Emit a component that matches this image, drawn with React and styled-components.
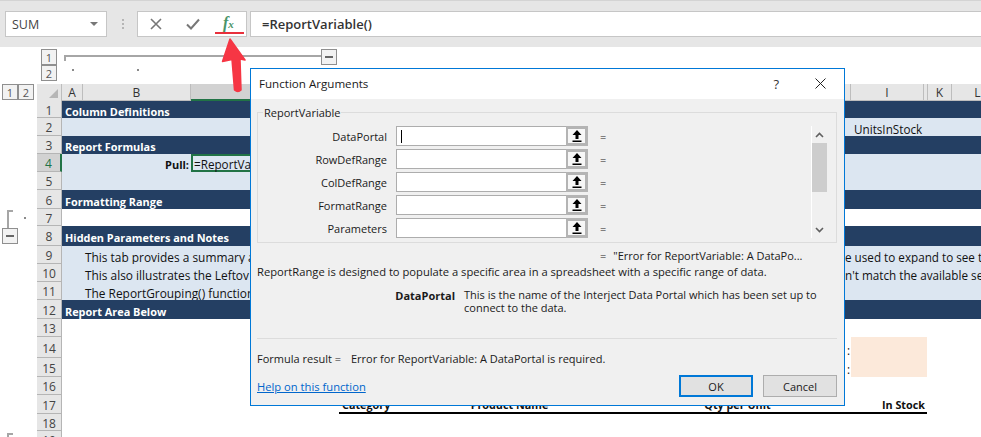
import React from 'react';
import styled, { createGlobalStyle } from 'styled-components';

const GlobalStyle = createGlobalStyle`
  html, body {
    margin: 0;
    padding: 0;
    background: #fff;
  }
  * {
    box-sizing: border-box;
  }
`;

const Page = styled.div`
  position: relative;
  width: 981px;
  height: 437px;
  overflow: hidden;
  background: #fff;
  color: #111;
  font-family: 'Open Sans', 'Liberation Sans', sans-serif;
  font-size: 11px;
`;

const FormulaBar = styled.div`
  display: flex;
  align-items: center;
  height: 47px;
  padding-left: 5px;
  background: #e6e6e6;
  border-top: 1px solid #d4d4d4;
`;

const NameBox = styled.div`
  display: flex;
  align-items: center;
  justify-content: space-between;
  width: 102px;
  height: 26px;
  padding: 0 8px 0 6px;
  background: #fff;
  border: 1px solid #c6c6c6;
  font-size: 12.5px;
  color: #444;
`;

const Caret = styled.span`
  width: 0;
  height: 0;
  border-left: 4px solid transparent;
  border-right: 4px solid transparent;
  border-top: 4px solid #777;
`;

const Grip = styled.div`
  display: flex;
  flex-direction: column;
  gap: 2px;
  margin: 0 13px 0 15px;
`;

const GripDot = styled.span`
  width: 2px;
  height: 2px;
  background: #b5b5b5;
`;

const FxBox = styled.div`
  position: relative;
  display: flex;
  align-items: center;
  width: 110px;
  height: 26px;
  padding-left: 12px;
  background: #fff;
  border: 1px solid #c6c6c6;
`;

const FxIcon = styled.span`
  margin: -3px 0 0 23px;
  font-family: 'Liberation Serif', serif;
  font-style: italic;
  font-weight: 700;
  font-size: 16px;
  color: #4a9468;

  small {
    font-size: 11px;
  }
`;

const FxUnderline = styled.span`
  position: absolute;
  left: 77px;
  bottom: 2px;
  width: 29px;
  height: 2px;
  background: #e8303c;
`;

const FormulaInput = styled.div`
  display: flex;
  align-items: center;
  flex: 1;
  height: 26px;
  margin-left: 3px;
  padding-left: 11px;
  background: #fff;
  border: 1px solid #c6c6c6;
  border-right: none;
  font-size: 13px;
  font-weight: 600;
  color: #333;
`;

const OutlineBar = styled.div`
  display: flex;
  height: 37px;
  padding: 2px 0 0 41px;
`;

const LevelStack = styled.div`
  display: flex;
  flex-direction: column;
`;

const LevelButton = styled.div`
  display: flex;
  align-items: center;
  justify-content: center;
  width: 16px;
  height: 16px;
  border: 1px solid #8f8f8f;
  background: #f2f2f2;
  color: #555;
  font-size: 11px;
`;

const OutlineTrack = styled.div`
  position: relative;
  width: 258px;
  height: 22px;
  margin-left: 7px;
`;

const OutlineLine = styled.div`
  width: 100%;
  height: 6px;
  margin-top: 6px;
  border-top: 2px solid #a6a6a6;
  border-left: 2px solid #a6a6a6;
`;

const OutlineDots = styled.div`
  display: flex;
  gap: 63px;
  padding-left: 8px;
  margin-top: 8px;
`;

const TinyDot = styled.span`
  width: 2px;
  height: 2px;
  background: #8a8a8a;
`;

const MinusButton = styled(LevelButton)`
  position: ${({ $floating }) => ($floating ? 'absolute' : 'static')};
  top: 0;
  right: -15px;
  &::before {
    content: '';
    width: 8px;
    height: 2px;
    background: #666;
  }
`;

const SheetArea = styled.div`
  display: flex;
`;

const Gutter = styled.div`
  display: flex;
  flex-direction: column;
  flex: none;
  width: 37px;
  padding-left: 2px;
`;

const LevelRow = styled.div`
  display: flex;
  margin-bottom: 110px;
`;

const BracketRow = styled.div`
  display: flex;
  height: 18px;
  padding-left: 5px;
`;

const Bracket = styled.div`
  width: 6px;
  height: 18px;
  border-left: 2px solid #a6a6a6;
  border-top: 2px solid #a6a6a6;
`;

const BracketDot = styled(TinyDot)`
  margin: 7px 0 0 11px;
`;

const BracketStub = styled.div`
  width: 6px;
  height: 4px;
  margin: 189px 0 0 5px;
  border-left: 2px solid #a6a6a6;
  border-top: 2px solid #a6a6a6;
`;

const Sheet = styled.div`
  flex: 1;
  min-width: 0;
  display: flex;
  flex-direction: column;
`;

const ColumnHeader = styled.div`
  display: flex;
  height: 17px;
`;

const Corner = styled.div`
  display: flex;
  align-items: flex-end;
  justify-content: flex-end;
  flex: none;
  width: 25px;
  padding: 0 3px 3px 0;
  background: #e6e6e6;
  border-right: 1px solid #bdbdbd;
  &::after {
    content: '';
    border-left: 9px solid transparent;
    border-bottom: 9px solid #b6b6b6;
  }
`;

const ColumnCell = styled.div`
  display: flex;
  align-items: center;
  justify-content: center;
  flex: none;
  width: ${({ $w }) => $w}px;
  background: ${({ $active }) => ($active ? '#d2d2d2' : '#e6e6e6')};
  border-right: 1px solid #bdbdbd;
  border-bottom: ${({ $active }) => ($active ? '2px solid #217346' : '1px solid #bdbdbd')};
  font-size: 12px;
  color: #333;
`;

const Row = styled.div`
  display: flex;
  height: ${({ $h }) => $h}px;
`;

const RowHead = styled.div`
  display: flex;
  align-items: center;
  justify-content: center;
  width: 25px;
  flex: none;
  padding-top: 2px;
  background: ${({ $active }) => ($active ? '#d2d2d2' : '#e6e6e6')};
  border-bottom: 1px solid #b5b5b5;
  border-right: ${({ $active }) => ($active ? '2px solid #217346' : '1px solid #b5b5b5')};
  color: ${({ $active }) => ($active ? '#217346' : '#444')};
  font-size: 12px;
`;

const tones = { dark: '#243f63', light: '#dce6f1', none: '#fff' };

const RowBody = styled.div`
  flex: 1;
  min-width: 0;
  display: flex;
  align-items: center;
  overflow: hidden;
  white-space: nowrap;
  background: ${({ $tone }) => tones[$tone]};
  color: ${({ $tone }) => ($tone === 'dark' ? '#fff' : '#111')};
  font-size: ${({ $tone }) => ($tone === 'dark' ? 10.9 : 11.7)}px;
  font-weight: ${({ $tone }) => ($tone === 'dark' ? 700 : 400)};
  padding-left: ${({ $tone }) => ($tone === 'dark' ? 3 : 0)}px;
  padding-top: ${({ $flush }) => ($flush ? 0 : 3)}px;
`;

const NoteLeft = styled.span`
  width: 188px;
  flex: none;
  padding-left: 23px;
  overflow: hidden;
  font-size: 11.9px;
`;

const NoteRight = styled.span`
  flex: none;
  margin-left: ${({ $offset }) => $offset}px;
`;

const PullLabel = styled.span`
  flex: none;
  width: 129px;
  padding: 2px 2px 0 0;
  text-align: right;
  font-size: 11px;
  font-weight: 700;
`;

const ActiveCell = styled.div`
  display: flex;
  align-items: center;
  flex: none;
  height: 100%;
  width: 200px;
  padding: 1px 0 0 1px;
  border: 2px solid #217346;
`;

const PeachBlock = styled.div`
  display: flex;
  align-items: flex-end;
  height: 100%;
  margin-left: 785px;
  line-height: 15px;
  &::after {
    content: '';
    align-self: stretch;
    width: 76px;
    margin-left: 1px;
    background: #fce9da;
  }
`;

const ReportHead = styled.div`
  display: flex;
  align-items: flex-end;
  justify-content: space-between;
  flex: none;
  width: 588px;
  height: 19px;
  margin-left: 277px;
  padding: 0 2px 0 3px;
  border-bottom: 2px solid #000;
  font-size: 10.8px;
  font-weight: 700;
`;

const HeadLabel = styled.span`
  width: ${({ $w }) => $w}px;
  text-align: ${({ $right }) => ($right ? 'right' : 'left')};
`;

const Dialog = styled.div`
  position: absolute;
  left: 250px;
  top: 68px;
  width: 595px;
  height: 338px;
  display: flex;
  flex-direction: column;
  background: #f0f0f0;
  border: 1px solid #0078d7;
  font-size: 11px;
  color: #1a1a1a;
`;

const TitleBar = styled.div`
  display: flex;
  align-items: center;
  justify-content: space-between;
  height: 30px;
  flex: none;
  padding: 0 18px 1px 8px;
  background: #fff;
  font-size: 11.6px;
`;

const TitleActions = styled.div`
  display: flex;
  align-items: center;
  gap: 36px;
  font-size: 13px;
  color: #333;
`;

const Body = styled.div`
  flex: 1;
  display: flex;
  flex-direction: column;
  padding: 13px 7px 0 6px;
`;

const ArgGroup = styled.div`
  position: relative;
  display: flex;
  justify-content: space-between;
  flex: none;
  height: 131px;
  padding: 13px 9px 0 0;
  border: 1px solid #dcdcdc;
`;

const GroupLegend = styled.span`
  position: absolute;
  left: 5px;
  top: -8px;
  padding: 0 1px;
  background: #f0f0f0;
`;

const ArgList = styled.div`
  display: flex;
  flex-direction: column;
  gap: 3px;
`;

const ArgRow = styled.div`
  display: flex;
  align-items: center;
  height: 20px;
`;

const ArgLabel = styled.span`
  width: 129px;
  text-align: right;
`;

const ArgInput = styled.div`
  display: flex;
  align-items: center;
  width: 192px;
  height: 20px;
  margin-left: 9px;
  padding-left: 4px;
  background: #fff;
  border: 1px solid #adadad;
  border-right: none;
`;

const TextCursor = styled.span`
  width: 1px;
  height: 13px;
  background: #000;
`;

const PickButton = styled.div`
  display: flex;
  align-items: center;
  justify-content: center;
  width: 22px;
  height: 20px;
  margin: -1px 0 -1px auto;
  background: #f7f7f7;
  border: 3px solid #b4b4b4;
  border-left-width: 2px;
`;

const Equals = styled.span`
  margin-left: 12px;
`;

const Scrollbar = styled.div`
  display: flex;
  flex-direction: column;
  align-items: center;
  width: 16px;
  height: 112px;
  border-left: 1px solid #fff;
`;

const ScrollArrow = styled.div`
  display: flex;
  align-items: center;
  justify-content: center;
  width: 15px;
  height: 17px;
  flex: none;
`;

const ScrollThumb = styled.div`
  width: 15px;
  height: 49px;
  background: #cdcdcd;
  margin-bottom: auto;
`;

const ResultLine = styled.div`
  display: flex;
  flex: none;
  height: 18px;
  padding-left: 343px;
  margin-top: 3px;
  align-items: center;
`;

const ResultText = styled.span`
  margin-left: 7px;
`;

const Description = styled.div`
  flex: none;
  height: 14px;
  display: flex;
  align-items: center;
  font-size: 11.2px;
`;

const ArgHelp = styled.div`
  display: flex;
  flex: none;
  margin-top: 10px;
  height: 50px;
`;

const ArgHelpName = styled.b`
  width: 198px;
  text-align: right;
  flex: none;
`;

const ArgHelpText = styled.p`
  margin: 0 0 0 9px;
  width: 370px;
  line-height: 13px;
`;

const Divider = styled.div`
  flex: none;
  height: 1px;
  background: #dcdcdc;
`;

const FormulaResult = styled.div`
  display: flex;
  flex: none;
  gap: 10px;
  margin-top: 12px;
`;

const FooterRow = styled.div`
  display: flex;
  align-items: center;
  justify-content: space-between;
  flex: none;
  margin-top: 9px;
`;

const HelpLink = styled.a`
  color: #0066cc;
  font-size: 11.2px;
  text-decoration: underline;
`;

const Buttons = styled.div`
  display: flex;
  gap: 10px;
`;

const DialogButton = styled.div`
  display: flex;
  align-items: center;
  justify-content: center;
  width: 74px;
  height: 22px;
  background: #e1e1e1;
  border: ${({ $primary }) => ($primary ? '2px solid #0078d7' : '1px solid #adadad')};
  font-size: 11px;
`;

const ArrowOverlay = styled.svg`
  position: absolute;
  left: 215px;
  top: 34px;
`;

const CheckWrap = styled.span`
  display: flex;
  margin-left: 24px;
`;

const CrossIcon = () => (
  <svg width="12" height="12" viewBox="0 0 12 12">
    <path d="M1 1l10 10M11 1L1 11" stroke="#777" strokeWidth="1.6" fill="none" />
  </svg>
);

const CheckIcon = () => (
  <CheckWrap>
    <svg width="14" height="12" viewBox="0 0 14 12">
      <path d="M1 6.5l4 4 8-9" stroke="#777" strokeWidth="2" fill="none" />
    </svg>
  </CheckWrap>
);

const CloseIcon = () => (
  <svg width="11" height="11" viewBox="0 0 11 11">
    <path d="M0.5 0.5l10 10M10.5 0.5l-10 10" stroke="#222" strokeWidth="1" fill="none" />
  </svg>
);

const PickIcon = () => (
  <svg width="10" height="12" viewBox="0 0 10 12">
    <path d="M5 0L9.5 5H6.5V9H3.5V5H0.5Z M0.5 10.5H9.5V12H0.5Z" fill="#000" />
  </svg>
);

const ChevronIcon = ({ down }) => (
  <svg width="9" height="6" viewBox="0 0 9 6">
    <path d={down ? 'M1 1l3.5 3.5L8 1' : 'M1 5l3.5-3.5L8 5'} stroke="#606060" strokeWidth="1.6" fill="none" />
  </svg>
);

const args = ['DataPortal', 'RowDefRange', 'ColDefRange', 'FormatRange', 'Parameters'];

const rows = [
  { n: 1, h: 17, tone: 'dark', text: 'Column Definitions' },
  { n: 2, h: 18, tone: 'light', right: 'UnitsInStock', offset: 792 },
  { n: 3, h: 18, tone: 'dark', text: 'Report Formulas' },
  { n: 4, h: 18, tone: 'light', active: true },
  { n: 5, h: 18, tone: 'light' },
  { n: 6, h: 19, tone: 'dark', text: 'Formatting Range' },
  { n: 7, h: 17, tone: 'none' },
  { n: 8, h: 20, tone: 'dark', text: 'Hidden Parameters and Notes' },
  { n: 9, h: 18, tone: 'light', note: 'This tab provides a summary a', right: 'e used to expand to see th', offset: 595 },
  { n: 10, h: 18, tone: 'light', note: 'This also illustrates the Leftov', right: "n't match the available se", offset: 595 },
  { n: 11, h: 18, tone: 'light', note: 'The ReportGrouping() function' },
  { n: 12, h: 19, tone: 'dark', text: 'Report Area Below' },
  { n: 13, h: 18, tone: 'none' },
  { n: 14, h: 21, tone: 'none', peach: true },
  { n: 15, h: 19, tone: 'none', peach: true },
  { n: 16, h: 18, tone: 'none' },
  { n: 17, h: 19, tone: 'none', report: true },
  { n: 18, h: 17, tone: 'none' },
  { n: 19, h: 18, tone: 'none' },
];

const SheetRow = ({ row }) => (
  <Row $h={row.h}>
    <RowHead $active={row.active}>{row.n}</RowHead>
    <RowBody $tone={row.tone} $flush={row.active || row.peach || row.report}>
      {row.text}
      {row.note && <NoteLeft>{row.note}</NoteLeft>}
      {row.right && <NoteRight $offset={row.offset}>{row.right}</NoteRight>}
      {row.active && (
        <>
          <PullLabel>Pull:</PullLabel>
          <ActiveCell>=ReportVariable()</ActiveCell>
        </>
      )}
      {row.peach && <PeachBlock>:</PeachBlock>}
      {row.report && (
        <ReportHead>
          <HeadLabel $w={128}>Category</HeadLabel>
          <HeadLabel $w={233}>Product Name</HeadLabel>
          <HeadLabel $w={100}>Qty per Unit</HeadLabel>
          <HeadLabel $w={120} $right>In Stock</HeadLabel>
        </ReportHead>
      )}
    </RowBody>
  </Row>
);

const App = () => (
  <Page>
    <GlobalStyle />
    <FormulaBar>
      <NameBox>
        SUM
        <Caret />
      </NameBox>
      <Grip>
        <GripDot />
        <GripDot />
        <GripDot />
      </Grip>
      <FxBox>
        <CrossIcon />
        <CheckIcon />
        <FxIcon>
          f<small>x</small>
        </FxIcon>
        <FxUnderline />
      </FxBox>
      <FormulaInput>=ReportVariable()</FormulaInput>
    </FormulaBar>

    <OutlineBar>
      <LevelStack>
        <LevelButton>1</LevelButton>
        <LevelButton>2</LevelButton>
      </LevelStack>
      <OutlineTrack>
        <OutlineLine />
        <OutlineDots>
          <TinyDot />
          <TinyDot />
        </OutlineDots>
        <MinusButton $floating />
      </OutlineTrack>
    </OutlineBar>

    <SheetArea>
      <Gutter>
        <LevelRow>
          <LevelButton>1</LevelButton>
          <LevelButton>2</LevelButton>
        </LevelRow>
        <BracketRow>
          <Bracket />
          <BracketDot />
        </BracketRow>
        <MinusButton />
        <BracketStub />
      </Gutter>
      <Sheet>
        <ColumnHeader>
          <Corner />
          <ColumnCell $w={21}>A</ColumnCell>
          <ColumnCell $w={108}>B</ColumnCell>
          <ColumnCell $w={60} $active />
          <ColumnCell $w={600} />
          <ColumnCell $w={73}>I</ColumnCell>
          <ColumnCell $w={4} />
          <ColumnCell $w={24}>K</ColumnCell>
          <ColumnCell $w={52}>L</ColumnCell>
        </ColumnHeader>
        {rows.map((row) => (
          <SheetRow key={row.n} row={row} />
        ))}
      </Sheet>
    </SheetArea>

    <ArrowOverlay width="40" height="62" viewBox="0 0 40 62">
      <path
        d="M15 5L7.5 27.5L17 25.5L19.5 56Q23 59 26 56L25 25L30 26Z"
        fill="#f63644"
        stroke="#f63644"
        strokeWidth="1.5"
        strokeLinejoin="round"
      />
    </ArrowOverlay>

    <Dialog>
      <TitleBar>
        Function Arguments
        <TitleActions>
          ?
          <CloseIcon />
        </TitleActions>
      </TitleBar>
      <Body>
        <ArgGroup>
          <GroupLegend>ReportVariable</GroupLegend>
          <ArgList>
            {args.map((name, i) => (
              <ArgRow key={name}>
                <ArgLabel>{name}</ArgLabel>
                <ArgInput>
                  {i === 0 && <TextCursor />}
                  <PickButton>
                    <PickIcon />
                  </PickButton>
                </ArgInput>
                <Equals>=</Equals>
              </ArgRow>
            ))}
          </ArgList>
          <Scrollbar>
            <ScrollArrow>
              <ChevronIcon />
            </ScrollArrow>
            <ScrollThumb />
            <ScrollArrow>
              <ChevronIcon down />
            </ScrollArrow>
          </Scrollbar>
        </ArgGroup>
        <ResultLine>
          =
          <ResultText>"Error for ReportVariable: A DataPo...</ResultText>
        </ResultLine>
        <Description>
          ReportRange is designed to populate a specific area in a spreadsheet with a specific range of data.
        </Description>
        <ArgHelp>
          <ArgHelpName>DataPortal</ArgHelpName>
          <ArgHelpText>
            This is the name of the Interject Data Portal which has been set up to connect to the data.
          </ArgHelpText>
        </ArgHelp>
        <Divider />
        <FormulaResult>
          <span>Formula result =</span>
          <span>Error for ReportVariable: A DataPortal is required.</span>
        </FormulaResult>
        <FooterRow>
          <HelpLink>Help on this function</HelpLink>
          <Buttons>
            <DialogButton $primary>OK</DialogButton>
            <DialogButton>Cancel</DialogButton>
          </Buttons>
        </FooterRow>
      </Body>
    </Dialog>
  </Page>
);

export default App;
